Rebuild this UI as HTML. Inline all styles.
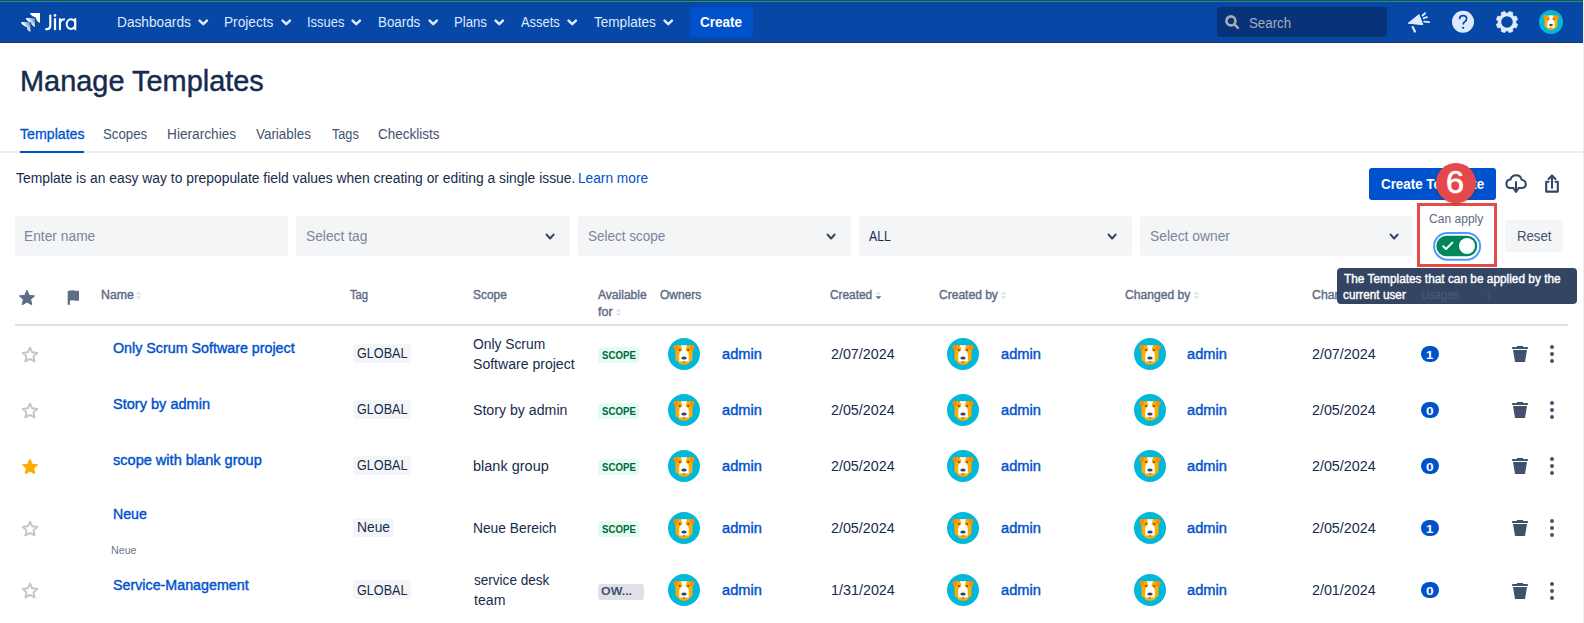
<!DOCTYPE html>
<html><head><meta charset="utf-8"><title>Manage Templates</title>
<style>
html,body{margin:0;padding:0;background:#fff;width:1584px;height:623px;overflow:hidden;position:relative;font-family:"Liberation Sans",sans-serif}
.t{position:absolute;white-space:nowrap;line-height:1;transform-origin:0 0;font-family:"Liberation Sans",sans-serif}
.r{position:absolute;box-sizing:content-box;display:block}
</style></head><body>
<div class="r" style="left:0px;top:0px;width:1583px;height:42px;background:#0747a6;border-radius:0px;"></div>
<div class="r" style="left:0px;top:0px;width:1583px;height:1px;background:#025a5c;border-radius:0px;"></div>
<div class="r" style="left:0px;top:1px;width:1583px;height:1px;background:#3e8184;border-radius:0px;"></div>
<div class="r" style="left:0px;top:42px;width:1583px;height:1px;background:#26344d;border-radius:0px;"></div>
<div class="r" style="left:1583px;top:0px;width:1px;height:623px;background:#efefef;border-radius:0px;"></div>
<svg class="r" style="left:20px;top:12px;" width="22" height="22" viewBox="0 0 22 22">
<defs><linearGradient id="lg1" x1="1" y1="0" x2="0" y2="0.7"><stop offset="0.05" stop-color="#fff" stop-opacity="0.25"/><stop offset="0.6" stop-color="#fff"/></linearGradient></defs>
<path d="M10 1.1 H20 V10.7 Q16.4 9.8 15.9 5.4 Q11.5 4.9 10 1.1Z" fill="#fff"/>
<path d="M5.7 5.9 H15 V14.9 Q11.6 14.1 11.1 10.3 Q7.1 9.7 5.7 5.9Z" fill="url(#lg1)"/>
<path d="M0.9 10.1 H10.5 V19.8 Q7.2 18.9 6.8 14.9 Q2.5 14.4 0.9 10.1Z" fill="url(#lg1)"/>
</svg>
<svg class="r" style="left:43px;top:12px;" width="36" height="20" viewBox="0 0 36 20">
<path d="M7.3 2.7 V13.6 Q7.3 17.1 4.3 17.1 H2.4" stroke="#fff" stroke-width="2.1" fill="none"/>
<rect x="10.9" y="6.3" width="2.2" height="11.8" fill="#fff"/><circle cx="12" cy="3.4" r="1.3" fill="#fff"/>
<rect x="15.9" y="6.3" width="2.1" height="11.8" fill="#fff"/><path d="M17 11.8 Q17 7.3 21.9 7.3" stroke="#fff" stroke-width="2.1" fill="none"/>
<ellipse cx="28" cy="12.05" rx="4.3" ry="4.85" stroke="#fff" stroke-width="2.05" fill="none"/><rect x="31.2" y="6.2" width="2.05" height="11.9" fill="#fff"/>
</svg>
<span class="t" style="left:116.78px;top:15px;font-size:14px;font-weight:400;color:#deebff;transform:scaleX(0.9783);">Dashboards</span>
<svg class="r" style="left:198px;top:17.6px;" width="11" height="9" viewBox="0 0 11 9"><path d="M1.6 2.6 L5.25 6.20 L8.90 2.6" stroke="#deebff" stroke-width="2.5" fill="none" stroke-linecap="round" stroke-linejoin="round"/></svg>
<span class="t" style="left:224.09px;top:15px;font-size:14px;font-weight:400;color:#deebff;transform:scaleX(0.9754);">Projects</span>
<svg class="r" style="left:280.8px;top:17.6px;" width="11" height="9" viewBox="0 0 11 9"><path d="M1.6 2.6 L5.25 6.20 L8.90 2.6" stroke="#deebff" stroke-width="2.5" fill="none" stroke-linecap="round" stroke-linejoin="round"/></svg>
<span class="t" style="left:306.54px;top:15px;font-size:14px;font-weight:400;color:#deebff;transform:scaleX(0.9230);">Issues</span>
<svg class="r" style="left:351.4px;top:17.6px;" width="11" height="9" viewBox="0 0 11 9"><path d="M1.6 2.6 L5.25 6.20 L8.90 2.6" stroke="#deebff" stroke-width="2.5" fill="none" stroke-linecap="round" stroke-linejoin="round"/></svg>
<span class="t" style="left:378.01px;top:15px;font-size:14px;font-weight:400;color:#deebff;transform:scaleX(0.9532);">Boards</span>
<svg class="r" style="left:427.8px;top:17.6px;" width="11" height="9" viewBox="0 0 11 9"><path d="M1.6 2.6 L5.25 6.20 L8.90 2.6" stroke="#deebff" stroke-width="2.5" fill="none" stroke-linecap="round" stroke-linejoin="round"/></svg>
<span class="t" style="left:454.12px;top:15px;font-size:14px;font-weight:400;color:#deebff;transform:scaleX(0.9406);">Plans</span>
<svg class="r" style="left:494.2px;top:17.6px;" width="11" height="9" viewBox="0 0 11 9"><path d="M1.6 2.6 L5.25 6.20 L8.90 2.6" stroke="#deebff" stroke-width="2.5" fill="none" stroke-linecap="round" stroke-linejoin="round"/></svg>
<span class="t" style="left:520.70px;top:15px;font-size:14px;font-weight:400;color:#deebff;transform:scaleX(0.9221);">Assets</span>
<svg class="r" style="left:567px;top:17.6px;" width="11" height="9" viewBox="0 0 11 9"><path d="M1.6 2.6 L5.25 6.20 L8.90 2.6" stroke="#deebff" stroke-width="2.5" fill="none" stroke-linecap="round" stroke-linejoin="round"/></svg>
<span class="t" style="left:593.65px;top:15px;font-size:14px;font-weight:400;color:#deebff;transform:scaleX(0.9688);">Templates</span>
<svg class="r" style="left:663px;top:17.6px;" width="11" height="9" viewBox="0 0 11 9"><path d="M1.6 2.6 L5.25 6.20 L8.90 2.6" stroke="#deebff" stroke-width="2.5" fill="none" stroke-linecap="round" stroke-linejoin="round"/></svg>
<div class="r" style="left:690px;top:7px;width:63px;height:30px;background:#0052cc;border-radius:3px;"></div>
<span class="t" style="left:700.39px;top:15px;font-size:14px;font-weight:700;color:#ffffff;transform:scaleX(0.9635);">Create</span>
<div class="r" style="left:1217px;top:7px;width:170px;height:30px;background:#093378;border-radius:3px;"></div>
<svg class="r" style="left:1224px;top:14px;" width="17" height="17" viewBox="0 0 17 17"><circle cx="6.9" cy="6.9" r="4.5" stroke="#a5adba" stroke-width="2.6" fill="none"/><path d="M10.2 10.2 L13.9 13.9" stroke="#a5adba" stroke-width="2.6" stroke-linecap="round"/></svg>
<span class="t" style="left:1248.79px;top:16px;font-size:14px;font-weight:400;color:#a5adba;transform:scaleX(0.9485);">Search</span>
<svg class="r" style="left:1406px;top:10px;" width="26" height="24" viewBox="0 0 26 24">
<path d="M2.2 13.2 L13 4.6 L16.8 14.7 Z" fill="#deebff" stroke="#deebff" stroke-width="1" stroke-linejoin="round"/>
<path d="M6.7 17.1 L8.9 21.6" stroke="#deebff" stroke-width="2.2" stroke-linecap="round"/>
<path d="M16.6 5.5 L19.1 3.3 M17.7 8.2 L21 7.2 M18.2 11.6 L23.2 12.1" stroke="#deebff" stroke-width="1.9" stroke-linecap="round"/>
</svg>
<svg class="r" style="left:1451px;top:10px;" width="24" height="24" viewBox="0 0 24 24"><circle cx="12" cy="11.8" r="11" fill="#deebff"/><path d="M8.6 9.2 Q8.6 5.6 12.1 5.6 Q15.6 5.6 15.6 8.8 Q15.6 10.6 13.7 11.7 Q12.2 12.6 12.2 14.6" stroke="#0747a6" stroke-width="1.75" fill="none"/><circle cx="12.1" cy="17.8" r="1.15" fill="#0747a6"/></svg>
<svg class="r" style="left:1496px;top:11px;" width="22" height="22" viewBox="0 0 22 22"><polygon points="12.16,2.18 13.36,0.36 16.86,1.81 16.42,3.94 18.06,5.58 20.19,5.14 21.64,8.64 19.82,9.84 19.82,12.16 21.64,13.36 20.19,16.86 18.06,16.42 16.42,18.06 16.86,20.19 13.36,21.64 12.16,19.82 9.84,19.82 8.64,21.64 5.14,20.19 5.58,18.06 3.94,16.42 1.81,16.86 0.36,13.36 2.18,12.16 2.18,9.84 0.36,8.64 1.81,5.14 3.94,5.58 5.58,3.94 5.14,1.81 8.64,0.36 9.84,2.18" fill="#deebff" stroke="#deebff" stroke-width="0.8" stroke-linejoin="round"/><circle cx="11" cy="11" r="5.8" fill="#0747a6"/></svg>
<svg width="0" height="0" style="position:absolute"><defs><symbol id="dog" viewBox="0 0 32 32">
<circle cx="16" cy="16" r="16" fill="#00b8d9"/>
<path d="M7.2 7.2 H24.8 L24.4 21.5 Q24.2 23 22 23.6 L20.6 25.8 Q16 27.8 11.4 25.8 L10 23.6 Q7.8 23 7.6 21.5 Z" fill="#ffab00"/>
<path d="M5.4 9.2 Q5.4 6.9 7.8 6.9 L10 7.2 L9.6 12.3 L6.6 11.8 Q5.6 11 5.4 9.2 Z" fill="#ff8b00"/>
<path d="M26.6 9.2 Q26.6 6.9 24.2 6.9 L22 7.2 L22.4 12.3 L25.4 11.8 Q26.4 11 26.6 9.2 Z" fill="#ff8b00"/>
<path d="M12.9 7.3 H19.1 L18.6 8.8 Q17.6 10.2 17.7 12.6 Q20.8 14 20.8 16 V23.6 H11.2 V16 Q11.2 14 14.3 12.6 Q14.4 10.2 13.4 8.8 Z" fill="#fff"/>
<ellipse cx="16" cy="20" rx="2.7" ry="1.5" fill="#344563"/>
<path d="M14.8 23.6 H17.2 L16 24.8 Z" fill="#344563"/>
<circle cx="11.8" cy="11.9" r="0.95" fill="#344563"/><circle cx="20.3" cy="11.9" r="0.95" fill="#344563"/>
</symbol></defs></svg>
<svg class="r" style="left:1539px;top:10px" width="24" height="24" viewBox="0 0 32 32"><use href="#dog"/></svg>
<span class="t" style="left:20.01px;top:66px;font-size:30.3px;font-weight:400;color:#172b4d;transform:scaleX(0.9545);-webkit-text-stroke:0.45px #172b4d;">Manage Templates</span>
<div class="r" style="left:0px;top:151px;width:1583px;height:2px;background:#ebecf0;border-radius:0px;"></div>
<div class="r" style="left:20px;top:151px;width:64px;height:2px;background:#0052cc;border-radius:0px;"></div>
<span class="t" style="left:19.94px;top:127px;font-size:14px;font-weight:400;color:#0052cc;transform:scaleX(1.0117);-webkit-text-stroke:0.3px #0052cc;">Templates</span>
<span class="t" style="left:103.19px;top:127px;font-size:14px;font-weight:400;color:#42526e;transform:scaleX(0.9458);">Scopes</span>
<span class="t" style="left:167.08px;top:127px;font-size:14px;font-weight:400;color:#42526e;transform:scaleX(0.9772);">Hierarchies</span>
<span class="t" style="left:256.39px;top:127px;font-size:14px;font-weight:400;color:#42526e;transform:scaleX(0.9571);">Variables</span>
<span class="t" style="left:331.68px;top:127px;font-size:14px;font-weight:400;color:#42526e;transform:scaleX(0.9030);">Tags</span>
<span class="t" style="left:377.88px;top:127px;font-size:14px;font-weight:400;color:#42526e;transform:scaleX(0.9620);">Checklists</span>
<span class="t" style="left:15.65px;top:171px;font-size:14px;font-weight:400;color:#172b4d;transform:scaleX(0.9900);">Template is an easy way to prepopulate field values when creating or editing a single issue.</span>
<span class="t" style="left:578.08px;top:171px;font-size:14px;font-weight:400;color:#0052cc;transform:scaleX(0.9790);">Learn more</span>
<div class="r" style="left:15px;top:216px;width:273px;height:40px;background:#f4f5f7;border-radius:3px;"></div>
<span class="t" style="left:24.48px;top:229px;font-size:14px;font-weight:400;color:#7a869a;transform:scaleX(0.9851);">Enter name</span>
<div class="r" style="left:296px;top:216px;width:274px;height:40px;background:#f4f5f7;border-radius:3px;"></div>
<span class="t" style="left:305.65px;top:229px;font-size:14px;font-weight:400;color:#7a869a;transform:scaleX(0.9854);">Select tag</span>
<svg class="r" style="left:545px;top:232.2px;" width="11" height="9" viewBox="0 0 11 9"><path d="M1.6 2.6 L5.10 6.50 L8.60 2.6" stroke="#344563" stroke-width="2.1" fill="none" stroke-linecap="round" stroke-linejoin="round"/></svg>
<div class="r" style="left:578px;top:216px;width:273px;height:40px;background:#f4f5f7;border-radius:3px;"></div>
<span class="t" style="left:587.57px;top:229px;font-size:14px;font-weight:400;color:#7a869a;transform:scaleX(0.9629);">Select scope</span>
<svg class="r" style="left:825.7px;top:232.2px;" width="11" height="9" viewBox="0 0 11 9"><path d="M1.6 2.6 L5.10 6.50 L8.60 2.6" stroke="#344563" stroke-width="2.1" fill="none" stroke-linecap="round" stroke-linejoin="round"/></svg>
<div class="r" style="left:859px;top:216px;width:273px;height:40px;background:#f4f5f7;border-radius:3px;"></div>
<span class="t" style="left:868.92px;top:229px;font-size:14px;font-weight:400;color:#172b4d;transform:scaleX(0.8754);">ALL</span>
<svg class="r" style="left:1107px;top:232.2px;" width="11" height="9" viewBox="0 0 11 9"><path d="M1.6 2.6 L5.10 6.50 L8.60 2.6" stroke="#344563" stroke-width="2.1" fill="none" stroke-linecap="round" stroke-linejoin="round"/></svg>
<div class="r" style="left:1140px;top:216px;width:273px;height:40px;background:#f4f5f7;border-radius:3px;"></div>
<span class="t" style="left:1149.65px;top:229px;font-size:14px;font-weight:400;color:#7a869a;transform:scaleX(0.9881);">Select owner</span>
<svg class="r" style="left:1389px;top:232.2px;" width="11" height="9" viewBox="0 0 11 9"><path d="M1.6 2.6 L5.10 6.50 L8.60 2.6" stroke="#344563" stroke-width="2.1" fill="none" stroke-linecap="round" stroke-linejoin="round"/></svg>
<div class="r" style="left:1369px;top:168px;width:127px;height:32px;background:#0052cc;border-radius:3px;"></div>
<span class="t" style="left:1381.40px;top:177px;font-size:14px;font-weight:700;color:#ffffff;transform:scaleX(0.9557);">Create Template</span>
<svg class="r" style="left:1504px;top:172px;" width="24" height="24" viewBox="0 0 24 24"><path d="M9.6 16 H6.6 Q2.4 16 2.4 11.8 Q2.4 8 6.4 7.6 Q7.8 3.2 12.2 3.2 Q16.6 3.2 17.6 7.6 Q21.8 8.6 21.8 12 Q21.8 16 17.8 16 H14.4" stroke="#344563" stroke-width="2" fill="none" stroke-linecap="round"/>
<path d="M12 9.2 V19.4" stroke="#344563" stroke-width="2"/><path d="M9.2 17.2 L12 20.8 L14.8 17.2 Z" fill="#344563" stroke="#344563" stroke-width="1" stroke-linejoin="round"/></svg>
<svg class="r" style="left:1543px;top:172px;" width="18" height="23" viewBox="0 0 18 23"><path d="M5.6 9.8 H3.2 V19.6 H14.8 V9.8 H12.4" stroke="#344563" stroke-width="2.1" fill="none" stroke-linejoin="round" stroke-linecap="round"/>
<path d="M9 16.6 V4" stroke="#344563" stroke-width="2.1"/><path d="M5.6 7 L9 3.4 L12.4 7" stroke="#344563" stroke-width="2.1" fill="none" stroke-linecap="round" stroke-linejoin="round"/></svg>
<span class="t" style="left:1429.14px;top:213px;font-size:12px;font-weight:400;color:#5e6c84;transform:scaleX(1.0048);">Can apply</span>
<svg class="r" style="left:1432px;top:231px;" width="50" height="30" viewBox="0 0 50 30"><rect x="2.1" y="1.9" width="46" height="26.8" rx="13.4" fill="none" stroke="#4c9aff" stroke-width="2"/>
<rect x="4.3" y="4.8" width="41" height="20.4" rx="10.2" fill="#00875a"/>
<circle cx="35" cy="15" r="8" fill="#fff"/>
<path d="M11.2 15.2 L14 18 L20.4 11.6" stroke="#fff" stroke-width="2" fill="none" stroke-linecap="round" stroke-linejoin="round"/></svg>
<div class="r" style="left:1505px;top:220px;width:58px;height:32px;background:#f4f5f7;border-radius:3px;"></div>
<span class="t" style="left:1516.62px;top:229px;font-size:14px;font-weight:400;color:#42526e;transform:scaleX(0.9411);">Reset</span>
<svg class="r" style="left:18px;top:289px;" width="18" height="18" viewBox="0 0 18 18"><path d="M9 1.4 L11.3 6.4 L16.6 6.9 L12.6 10.5 L13.8 15.8 L9 13 L4.2 15.8 L5.4 10.5 L1.4 6.9 L6.7 6.4 Z" fill="#5e6c84" stroke="#5e6c84" stroke-width="1" stroke-linejoin="round"/></svg>
<svg class="r" style="left:66px;top:289px;" width="15" height="18" viewBox="0 0 15 18"><path d="M2.8 2 V15.8" stroke="#5e6c84" stroke-width="2.2"/><path d="M2.8 1.8 Q6 1 8.4 1.6 Q11 2.2 13 1.6 V11.4 Q11 12.2 8.4 11.6 Q6 11 2.8 11.8 Z" fill="#5e6c84"/></svg>
<span class="t" style="left:100.66px;top:289px;font-size:12px;font-weight:400;color:#5e6c84;-webkit-text-stroke:0.4px #5e6c84;transform:scaleX(1.0248);">Name</span>
<svg class="r" style="left:134.5px;top:291px;" width="7" height="9" viewBox="0 0 7 9"><path d="M0.6 3.6 L3.5 0.6 L6.4 3.6Z" fill="#dfe1e6"/><path d="M0.6 5.2 L3.5 8.2 L6.4 5.2Z" fill="#dfe1e6"/></svg>
<span class="t" style="left:349.71px;top:289px;font-size:12px;font-weight:400;color:#5e6c84;-webkit-text-stroke:0.4px #5e6c84;transform:scaleX(0.9367);">Tag</span>
<span class="t" style="left:472.60px;top:289px;font-size:12px;font-weight:400;color:#5e6c84;-webkit-text-stroke:0.4px #5e6c84;transform:scaleX(0.9924);">Scope</span>
<span class="t" style="left:598.12px;top:289px;font-size:12px;font-weight:400;color:#5e6c84;-webkit-text-stroke:0.4px #5e6c84;transform:scaleX(1.0048);">Available</span>
<span class="t" style="left:598.14px;top:306px;font-size:12px;font-weight:400;color:#5e6c84;-webkit-text-stroke:0.4px #5e6c84;transform:scaleX(1.0462);">for</span>
<svg class="r" style="left:614.8px;top:308px;" width="7" height="9" viewBox="0 0 7 9"><path d="M0.6 3.6 L3.5 0.6 L6.4 3.6Z" fill="#dfe1e6"/><path d="M0.6 5.2 L3.5 8.2 L6.4 5.2Z" fill="#dfe1e6"/></svg>
<span class="t" style="left:659.88px;top:289px;font-size:12px;font-weight:400;color:#5e6c84;-webkit-text-stroke:0.4px #5e6c84;">Owners</span>
<span class="t" style="left:830.14px;top:289px;font-size:12px;font-weight:400;color:#5e6c84;-webkit-text-stroke:0.4px #5e6c84;transform:scaleX(0.9858);">Created</span>
<svg class="r" style="left:874.5px;top:291px;" width="7" height="9" viewBox="0 0 7 9"><path d="M0.6 3.6 L3.5 0.6 L6.4 3.6Z" fill="#dfe1e6"/><path d="M0.6 5.2 L3.5 8.2 L6.4 5.2Z" fill="#5e6c84"/></svg>
<span class="t" style="left:938.74px;top:289px;font-size:12px;font-weight:400;color:#5e6c84;-webkit-text-stroke:0.4px #5e6c84;transform:scaleX(1.0031);">Created by</span>
<svg class="r" style="left:999.5px;top:291px;" width="7" height="9" viewBox="0 0 7 9"><path d="M0.6 3.6 L3.5 0.6 L6.4 3.6Z" fill="#dfe1e6"/><path d="M0.6 5.2 L3.5 8.2 L6.4 5.2Z" fill="#dfe1e6"/></svg>
<span class="t" style="left:1125.03px;top:289px;font-size:12px;font-weight:400;color:#5e6c84;-webkit-text-stroke:0.4px #5e6c84;transform:scaleX(1.0090);">Changed by</span>
<svg class="r" style="left:1192.5px;top:291px;" width="7" height="9" viewBox="0 0 7 9"><path d="M0.6 3.6 L3.5 0.6 L6.4 3.6Z" fill="#dfe1e6"/><path d="M0.6 5.2 L3.5 8.2 L6.4 5.2Z" fill="#dfe1e6"/></svg>
<span class="t" style="left:1311.53px;top:289px;font-size:12px;font-weight:400;color:#5e6c84;-webkit-text-stroke:0.4px #5e6c84;transform:scaleX(1.0253);">Changed</span>
<div class="r" style="left:15px;top:324px;width:1553px;height:2px;background:#dfe1e6;border-radius:0px;"></div>
<svg class="r" style="left:21px;top:346px;" width="18" height="18" viewBox="0 0 18 18"><path d="M9 1.6 L11.2 6.3 L16.3 6.9 L12.5 10.4 L13.6 15.5 L9 12.9 L4.4 15.5 L5.5 10.4 L1.7 6.9 L6.8 6.3 Z" fill="none" stroke="#c4c4c4" stroke-width="1.9" stroke-linejoin="round"/></svg>
<span class="t" style="left:112.68px;top:341px;font-size:14px;font-weight:400;color:#0052cc;-webkit-text-stroke:0.4px #0052cc;transform:scaleX(1.0193);">Only Scrum Software project</span>
<div class="r" style="left:353px;top:344px;width:58px;height:19px;background:#f4f5f7;border-radius:3px;"></div>
<span class="t" style="left:357.04px;top:346px;font-size:14px;font-weight:400;color:#172b4d;transform:scaleX(0.9015);">GLOBAL</span>
<span class="t" style="left:473.11px;top:337px;font-size:14px;font-weight:400;color:#172b4d;transform:scaleX(0.9869);">Only Scrum</span>
<span class="t" style="left:473.34px;top:357px;font-size:14px;font-weight:400;color:#172b4d;transform:scaleX(1.0041);">Software project</span>
<div class="r" style="left:598px;top:347px;width:41px;height:16px;background:#e3fcef;border-radius:3px;"></div>
<span class="t" style="left:601.83px;top:350px;font-size:11px;font-weight:700;color:#006644;transform:scaleX(0.8792);">SCOPE</span>
<svg class="r" style="left:668px;top:338px" width="32" height="32" viewBox="0 0 32 32"><use href="#dog"/></svg>
<span class="t" style="left:722.11px;top:347px;font-size:14px;font-weight:400;color:#0052cc;-webkit-text-stroke:0.4px #0052cc;transform:scaleX(1.0458);">admin</span>
<span class="t" style="left:830.57px;top:347px;font-size:14px;font-weight:400;color:#172b4d;transform:scaleX(1.0212);">2/07/2024</span>
<svg class="r" style="left:947px;top:338px" width="32" height="32" viewBox="0 0 32 32"><use href="#dog"/></svg>
<span class="t" style="left:1000.51px;top:347px;font-size:14px;font-weight:400;color:#0052cc;-webkit-text-stroke:0.4px #0052cc;transform:scaleX(1.0458);">admin</span>
<svg class="r" style="left:1134px;top:338px" width="32" height="32" viewBox="0 0 32 32"><use href="#dog"/></svg>
<span class="t" style="left:1186.81px;top:347px;font-size:14px;font-weight:400;color:#0052cc;-webkit-text-stroke:0.4px #0052cc;transform:scaleX(1.0458);">admin</span>
<span class="t" style="left:1311.67px;top:347px;font-size:14px;font-weight:400;color:#172b4d;transform:scaleX(1.0212);">2/07/2024</span>
<div class="r" style="left:1421px;top:346px;width:18px;height:16px;background:#0052cc;border-radius:8px;"></div>
<span class="t" style="left:1425.77px;top:350px;font-size:11px;font-weight:700;color:#ffffff;transform:scaleX(1.1895);">1</span>
<svg class="r" style="left:1510px;top:345px;" width="20" height="18" viewBox="0 0 20 18"><path d="M7 1 H13 V2 H7Z" fill="#42526e"/><rect x="2" y="2" width="16" height="2" rx="0.8" fill="#42526e"/><path d="M3 5 H17 L15 17 H5 Z" fill="#42526e"/></svg>
<svg class="r" style="left:1549px;top:345px;" width="6" height="20" viewBox="0 0 6 20"><circle cx="3" cy="2" r="2" fill="#42526e"/><circle cx="3" cy="9" r="2" fill="#42526e"/><circle cx="3" cy="16" r="2" fill="#42526e"/></svg>
<svg class="r" style="left:21px;top:402px;" width="18" height="18" viewBox="0 0 18 18"><path d="M9 1.6 L11.2 6.3 L16.3 6.9 L12.5 10.4 L13.6 15.5 L9 12.9 L4.4 15.5 L5.5 10.4 L1.7 6.9 L6.8 6.3 Z" fill="none" stroke="#c4c4c4" stroke-width="1.9" stroke-linejoin="round"/></svg>
<span class="t" style="left:112.60px;top:397px;font-size:14px;font-weight:400;color:#0052cc;-webkit-text-stroke:0.4px #0052cc;transform:scaleX(1.0393);">Story by admin</span>
<div class="r" style="left:353px;top:400px;width:58px;height:19px;background:#f4f5f7;border-radius:3px;"></div>
<span class="t" style="left:357.04px;top:402px;font-size:14px;font-weight:400;color:#172b4d;transform:scaleX(0.9015);">GLOBAL</span>
<span class="t" style="left:473.33px;top:403px;font-size:14px;font-weight:400;color:#172b4d;transform:scaleX(1.0110);">Story by admin</span>
<div class="r" style="left:598px;top:403px;width:41px;height:16px;background:#e3fcef;border-radius:3px;"></div>
<span class="t" style="left:601.83px;top:406px;font-size:11px;font-weight:700;color:#006644;transform:scaleX(0.8792);">SCOPE</span>
<svg class="r" style="left:668px;top:394px" width="32" height="32" viewBox="0 0 32 32"><use href="#dog"/></svg>
<span class="t" style="left:722.11px;top:403px;font-size:14px;font-weight:400;color:#0052cc;-webkit-text-stroke:0.4px #0052cc;transform:scaleX(1.0458);">admin</span>
<span class="t" style="left:830.57px;top:403px;font-size:14px;font-weight:400;color:#172b4d;transform:scaleX(1.0212);">2/05/2024</span>
<svg class="r" style="left:947px;top:394px" width="32" height="32" viewBox="0 0 32 32"><use href="#dog"/></svg>
<span class="t" style="left:1000.51px;top:403px;font-size:14px;font-weight:400;color:#0052cc;-webkit-text-stroke:0.4px #0052cc;transform:scaleX(1.0458);">admin</span>
<svg class="r" style="left:1134px;top:394px" width="32" height="32" viewBox="0 0 32 32"><use href="#dog"/></svg>
<span class="t" style="left:1186.81px;top:403px;font-size:14px;font-weight:400;color:#0052cc;-webkit-text-stroke:0.4px #0052cc;transform:scaleX(1.0458);">admin</span>
<span class="t" style="left:1311.67px;top:403px;font-size:14px;font-weight:400;color:#172b4d;transform:scaleX(1.0212);">2/05/2024</span>
<div class="r" style="left:1421px;top:402px;width:18px;height:16px;background:#0052cc;border-radius:8px;"></div>
<span class="t" style="left:1425.99px;top:406px;font-size:11px;font-weight:700;color:#ffffff;transform:scaleX(1.2336);">0</span>
<svg class="r" style="left:1510px;top:401px;" width="20" height="18" viewBox="0 0 20 18"><path d="M7 1 H13 V2 H7Z" fill="#42526e"/><rect x="2" y="2" width="16" height="2" rx="0.8" fill="#42526e"/><path d="M3 5 H17 L15 17 H5 Z" fill="#42526e"/></svg>
<svg class="r" style="left:1549px;top:401px;" width="6" height="20" viewBox="0 0 6 20"><circle cx="3" cy="2" r="2" fill="#42526e"/><circle cx="3" cy="9" r="2" fill="#42526e"/><circle cx="3" cy="16" r="2" fill="#42526e"/></svg>
<svg class="r" style="left:21px;top:458px;" width="18" height="18" viewBox="0 0 18 18"><path d="M9 1.6 L11.2 6.3 L16.3 6.9 L12.5 10.4 L13.6 15.5 L9 12.9 L4.4 15.5 L5.5 10.4 L1.7 6.9 L6.8 6.3 Z" fill="#ffab00" stroke="#ffab00" stroke-width="1.2" stroke-linejoin="round"/></svg>
<span class="t" style="left:112.79px;top:453px;font-size:14px;font-weight:400;color:#0052cc;-webkit-text-stroke:0.4px #0052cc;transform:scaleX(1.0391);">scope with blank group</span>
<div class="r" style="left:353px;top:456px;width:58px;height:19px;background:#f4f5f7;border-radius:3px;"></div>
<span class="t" style="left:357.04px;top:458px;font-size:14px;font-weight:400;color:#172b4d;transform:scaleX(0.9015);">GLOBAL</span>
<span class="t" style="left:473.32px;top:459px;font-size:14px;font-weight:400;color:#172b4d;transform:scaleX(1.0356);">blank group</span>
<div class="r" style="left:598px;top:459px;width:41px;height:16px;background:#e3fcef;border-radius:3px;"></div>
<span class="t" style="left:601.83px;top:462px;font-size:11px;font-weight:700;color:#006644;transform:scaleX(0.8792);">SCOPE</span>
<svg class="r" style="left:668px;top:450px" width="32" height="32" viewBox="0 0 32 32"><use href="#dog"/></svg>
<span class="t" style="left:722.11px;top:459px;font-size:14px;font-weight:400;color:#0052cc;-webkit-text-stroke:0.4px #0052cc;transform:scaleX(1.0458);">admin</span>
<span class="t" style="left:830.57px;top:459px;font-size:14px;font-weight:400;color:#172b4d;transform:scaleX(1.0212);">2/05/2024</span>
<svg class="r" style="left:947px;top:450px" width="32" height="32" viewBox="0 0 32 32"><use href="#dog"/></svg>
<span class="t" style="left:1000.51px;top:459px;font-size:14px;font-weight:400;color:#0052cc;-webkit-text-stroke:0.4px #0052cc;transform:scaleX(1.0458);">admin</span>
<svg class="r" style="left:1134px;top:450px" width="32" height="32" viewBox="0 0 32 32"><use href="#dog"/></svg>
<span class="t" style="left:1186.81px;top:459px;font-size:14px;font-weight:400;color:#0052cc;-webkit-text-stroke:0.4px #0052cc;transform:scaleX(1.0458);">admin</span>
<span class="t" style="left:1311.67px;top:459px;font-size:14px;font-weight:400;color:#172b4d;transform:scaleX(1.0212);">2/05/2024</span>
<div class="r" style="left:1421px;top:458px;width:18px;height:16px;background:#0052cc;border-radius:8px;"></div>
<span class="t" style="left:1425.99px;top:462px;font-size:11px;font-weight:700;color:#ffffff;transform:scaleX(1.2336);">0</span>
<svg class="r" style="left:1510px;top:457px;" width="20" height="18" viewBox="0 0 20 18"><path d="M7 1 H13 V2 H7Z" fill="#42526e"/><rect x="2" y="2" width="16" height="2" rx="0.8" fill="#42526e"/><path d="M3 5 H17 L15 17 H5 Z" fill="#42526e"/></svg>
<svg class="r" style="left:1549px;top:457px;" width="6" height="20" viewBox="0 0 6 20"><circle cx="3" cy="2" r="2" fill="#42526e"/><circle cx="3" cy="9" r="2" fill="#42526e"/><circle cx="3" cy="16" r="2" fill="#42526e"/></svg>
<svg class="r" style="left:21px;top:520px;" width="18" height="18" viewBox="0 0 18 18"><path d="M9 1.6 L11.2 6.3 L16.3 6.9 L12.5 10.4 L13.6 15.5 L9 12.9 L4.4 15.5 L5.5 10.4 L1.7 6.9 L6.8 6.3 Z" fill="none" stroke="#c4c4c4" stroke-width="1.9" stroke-linejoin="round"/></svg>
<span class="t" style="left:112.96px;top:507px;font-size:14px;font-weight:400;color:#0052cc;-webkit-text-stroke:0.4px #0052cc;transform:scaleX(1.0109);">Neue</span>
<span class="t" style="left:110.69px;top:545px;font-size:11px;font-weight:400;color:#6b778c;transform:scaleX(0.9695);">Neue</span>
<div class="r" style="left:353px;top:518px;width:41px;height:19px;background:#f4f5f7;border-radius:3px;"></div>
<span class="t" style="left:356.88px;top:520px;font-size:14px;font-weight:400;color:#172b4d;transform:scaleX(0.9852);">Neue</span>
<span class="t" style="left:473.28px;top:521px;font-size:14px;font-weight:400;color:#172b4d;transform:scaleX(0.9847);">Neue Bereich</span>
<div class="r" style="left:598px;top:521px;width:41px;height:16px;background:#e3fcef;border-radius:3px;"></div>
<span class="t" style="left:601.83px;top:524px;font-size:11px;font-weight:700;color:#006644;transform:scaleX(0.8792);">SCOPE</span>
<svg class="r" style="left:668px;top:512px" width="32" height="32" viewBox="0 0 32 32"><use href="#dog"/></svg>
<span class="t" style="left:722.11px;top:521px;font-size:14px;font-weight:400;color:#0052cc;-webkit-text-stroke:0.4px #0052cc;transform:scaleX(1.0458);">admin</span>
<span class="t" style="left:830.57px;top:521px;font-size:14px;font-weight:400;color:#172b4d;transform:scaleX(1.0212);">2/05/2024</span>
<svg class="r" style="left:947px;top:512px" width="32" height="32" viewBox="0 0 32 32"><use href="#dog"/></svg>
<span class="t" style="left:1000.51px;top:521px;font-size:14px;font-weight:400;color:#0052cc;-webkit-text-stroke:0.4px #0052cc;transform:scaleX(1.0458);">admin</span>
<svg class="r" style="left:1134px;top:512px" width="32" height="32" viewBox="0 0 32 32"><use href="#dog"/></svg>
<span class="t" style="left:1186.81px;top:521px;font-size:14px;font-weight:400;color:#0052cc;-webkit-text-stroke:0.4px #0052cc;transform:scaleX(1.0458);">admin</span>
<span class="t" style="left:1311.67px;top:521px;font-size:14px;font-weight:400;color:#172b4d;transform:scaleX(1.0212);">2/05/2024</span>
<div class="r" style="left:1421px;top:520px;width:18px;height:16px;background:#0052cc;border-radius:8px;"></div>
<span class="t" style="left:1425.77px;top:524px;font-size:11px;font-weight:700;color:#ffffff;transform:scaleX(1.1895);">1</span>
<svg class="r" style="left:1510px;top:519px;" width="20" height="18" viewBox="0 0 20 18"><path d="M7 1 H13 V2 H7Z" fill="#42526e"/><rect x="2" y="2" width="16" height="2" rx="0.8" fill="#42526e"/><path d="M3 5 H17 L15 17 H5 Z" fill="#42526e"/></svg>
<svg class="r" style="left:1549px;top:519px;" width="6" height="20" viewBox="0 0 6 20"><circle cx="3" cy="2" r="2" fill="#42526e"/><circle cx="3" cy="9" r="2" fill="#42526e"/><circle cx="3" cy="16" r="2" fill="#42526e"/></svg>
<svg class="r" style="left:21px;top:582px;" width="18" height="18" viewBox="0 0 18 18"><path d="M9 1.6 L11.2 6.3 L16.3 6.9 L12.5 10.4 L13.6 15.5 L9 12.9 L4.4 15.5 L5.5 10.4 L1.7 6.9 L6.8 6.3 Z" fill="none" stroke="#c4c4c4" stroke-width="1.9" stroke-linejoin="round"/></svg>
<span class="t" style="left:112.61px;top:578px;font-size:14px;font-weight:400;color:#0052cc;-webkit-text-stroke:0.4px #0052cc;transform:scaleX(1.0196);">Service-Management</span>
<div class="r" style="left:353px;top:580px;width:58px;height:19px;background:#f4f5f7;border-radius:3px;"></div>
<span class="t" style="left:357.04px;top:583px;font-size:14px;font-weight:400;color:#172b4d;transform:scaleX(0.9015);">GLOBAL</span>
<span class="t" style="left:473.57px;top:573px;font-size:14px;font-weight:400;color:#172b4d;transform:scaleX(0.9683);">service desk</span>
<span class="t" style="left:473.91px;top:593px;font-size:14px;font-weight:400;color:#172b4d;transform:scaleX(1.0084);">team</span>
<div class="r" style="left:598px;top:584px;width:46px;height:16px;background:#dfe1e6;border-radius:3px;"></div>
<span class="t" style="left:601.23px;top:586px;font-size:11px;font-weight:700;color:#42526e;transform:scaleX(1.1292);">OW...</span>
<svg class="r" style="left:668px;top:574px" width="32" height="32" viewBox="0 0 32 32"><use href="#dog"/></svg>
<span class="t" style="left:722.11px;top:583px;font-size:14px;font-weight:400;color:#0052cc;-webkit-text-stroke:0.4px #0052cc;transform:scaleX(1.0458);">admin</span>
<span class="t" style="left:831.06px;top:583px;font-size:14px;font-weight:400;color:#172b4d;transform:scaleX(1.0245);">1/31/2024</span>
<svg class="r" style="left:947px;top:574px" width="32" height="32" viewBox="0 0 32 32"><use href="#dog"/></svg>
<span class="t" style="left:1000.51px;top:583px;font-size:14px;font-weight:400;color:#0052cc;-webkit-text-stroke:0.4px #0052cc;transform:scaleX(1.0458);">admin</span>
<svg class="r" style="left:1134px;top:574px" width="32" height="32" viewBox="0 0 32 32"><use href="#dog"/></svg>
<span class="t" style="left:1186.81px;top:583px;font-size:14px;font-weight:400;color:#0052cc;-webkit-text-stroke:0.4px #0052cc;transform:scaleX(1.0458);">admin</span>
<span class="t" style="left:1311.67px;top:583px;font-size:14px;font-weight:400;color:#172b4d;transform:scaleX(1.0212);">2/01/2024</span>
<div class="r" style="left:1421px;top:582px;width:18px;height:16px;background:#0052cc;border-radius:8px;"></div>
<span class="t" style="left:1425.99px;top:586px;font-size:11px;font-weight:700;color:#ffffff;transform:scaleX(1.2336);">0</span>
<svg class="r" style="left:1510px;top:582px;" width="20" height="18" viewBox="0 0 20 18"><path d="M7 1 H13 V2 H7Z" fill="#42526e"/><rect x="2" y="2" width="16" height="2" rx="0.8" fill="#42526e"/><path d="M3 5 H17 L15 17 H5 Z" fill="#42526e"/></svg>
<svg class="r" style="left:1549px;top:582px;" width="6" height="20" viewBox="0 0 6 20"><circle cx="3" cy="2" r="2" fill="#42526e"/><circle cx="3" cy="9" r="2" fill="#42526e"/><circle cx="3" cy="16" r="2" fill="#42526e"/></svg>
<div class="r" style="left:1337px;top:268px;width:240px;height:36px;background:#344563;border-radius:4px;"></div>
<span class="t" style="left:1343.52px;top:273px;font-size:12px;font-weight:400;color:#ffffff;-webkit-text-stroke:0.4px #ffffff;transform:scaleX(0.9881);">The Templates that can be applied by the</span>
<span class="t" style="left:1343.02px;top:289px;font-size:12px;font-weight:400;color:#ffffff;-webkit-text-stroke:0.4px #ffffff;transform:scaleX(0.9811);">current user</span>
<span class="t" style="left:1420.76px;top:289px;font-size:12px;font-weight:400;color:#475673;-webkit-text-stroke:0.4px #475673;transform:scaleX(0.9430);">Usages</span>
<svg class="r" style="left:1485px;top:291px;" width="7" height="9" viewBox="0 0 7 9"><path d="M0.6 3.6 L3.5 0.6 L6.4 3.6Z M0.6 5.2 L3.5 8.2 L6.4 5.2Z" fill="#3f4f6c"/></svg>
<div class="r" style="left:1417px;top:203px;width:74px;height:58px;border:3px solid #e34c46"></div>
<div class="r" style="left:1436px;top:162.8px;width:40px;height:40px;border-radius:50%;background:#e5484a;box-shadow:0 1px 2px rgba(0,0,0,.25)"></div>
<span class="t" style="left:1446.32px;top:166px;font-size:32px;font-weight:400;color:#ffffff;transform:scaleX(1.0141);-webkit-text-stroke:0.7px #ffffff;">6</span>
</body></html>
